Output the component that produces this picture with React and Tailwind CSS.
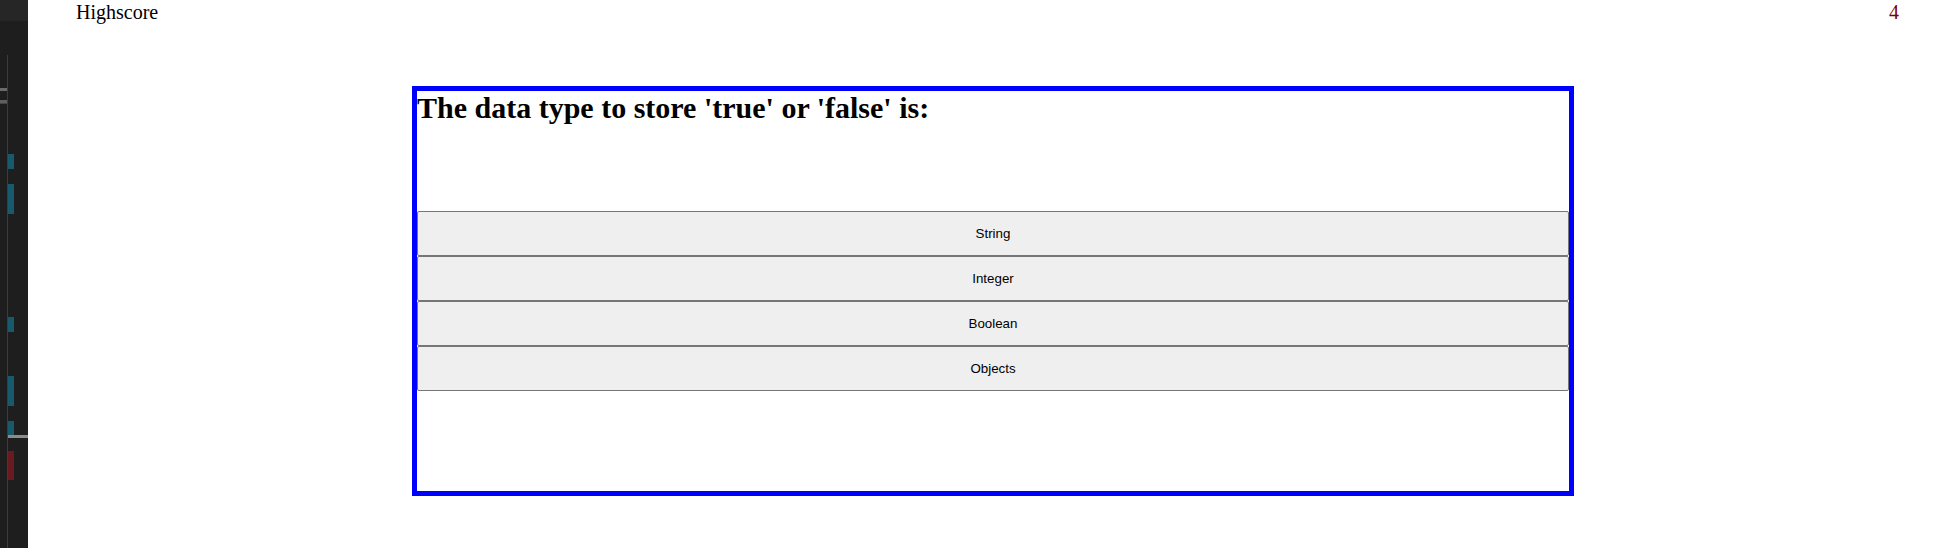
const answers = ["String", "Integer", "Boolean", "Objects"]

// editor gutter markers on the dark strip (top, height, colour)
const markers = [
  { top: 154, h: 15, c: "bg-[#175a6d]" },
  { top: 184, h: 30, c: "bg-[#175a6d]" },
  { top: 317, h: 15, c: "bg-[#175a6d]" },
  { top: 376, h: 30, c: "bg-[#175a6d]" },
  { top: 421, h: 14, c: "bg-[#175a6d]" },
  { top: 451, h: 29, c: "bg-[#6a1a20]" },
]

function EditorStrip() {
  return (
    <div className="relative w-[28px] h-[548px] shrink-0 bg-[#1e1e1e] overflow-hidden">
      <div className="h-[21px] bg-[#262626]" />
      <div className="absolute left-[7px] top-[55px] bottom-0 w-px bg-[#3c3c3c]" />
      <div className="absolute left-0 top-[88px] w-[7px] h-[3px] bg-[#6b6b6b]" />
      <div className="absolute left-0 top-[100px] w-[7px] h-[3px] bg-[#5f5f5f]" />
      <div className="absolute left-0 top-[103px] w-[7px] h-px bg-[#2c4a6b]" />
      {markers.map((m) => (
        <div
          key={m.top}
          className={"absolute left-[8px] w-[6px] " + m.c}
          style={{ top: m.top, height: m.h }}
        />
      ))}
      <div className="absolute left-[8px] top-[435px] w-[20px] h-[3px] bg-[#8c8c8c]" />
    </div>
  )
}

export default function App() {
  return (
    <div className="flex w-[1948px] h-[548px] bg-white overflow-hidden font-['Liberation_Serif',serif]">
      <EditorStrip />
      <div className="flex-1 flex flex-col min-w-0">
        <div className="flex justify-between h-[26px] pt-[1px] pl-[48px] pr-[49px] text-[20px] leading-[23px]">
          <span className="text-black">Highscore</span>
          <span className="text-[#800000]">4</span>
        </div>
        <div className="box-content mt-[60px] ml-[20%] w-[60%] h-[400px] shrink-0 border-[5px] border-[#0000ff] flex flex-col">
          <h2 className="m-0 text-[30px] font-bold leading-[34px] text-black">
            The data type to store 'true' or 'false' is:
          </h2>
          <div className="mt-[86px] flex flex-col">
            {answers.map((a) => (
              <button
                key={a}
                className="w-full h-[45px] bg-[#efefef] border border-[#767676] rounded-[2px] text-[13.33px] text-black font-['Liberation_Sans',Arial,sans-serif]"
              >
                {a}
              </button>
            ))}
          </div>
        </div>
      </div>
    </div>
  )
}
